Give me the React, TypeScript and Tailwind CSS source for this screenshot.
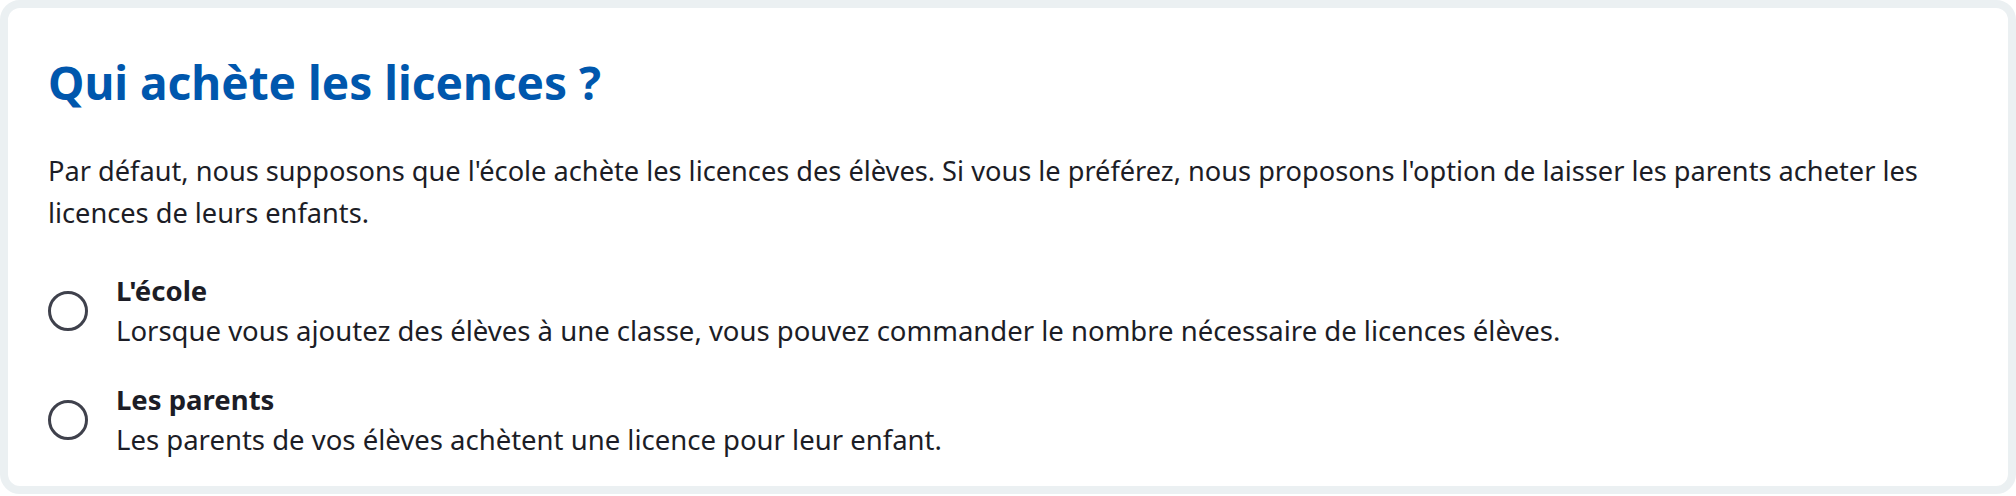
import React from "react";

const options = [
  {
    title: "L'école",
    text: "Lorsque vous ajoutez des élèves à une classe, vous pouvez commander le nombre nécessaire de licences élèves.",
  },
  {
    title: "Les parents",
    text: "Les parents de vos élèves achètent une licence pour leur enfant.",
  },
];

export default function App() {
  return (
    <div className="w-[2016px] h-[496px] bg-white" style={{ fontFamily: '"Noto Sans", "Open Sans", sans-serif' }}>
      <div className="h-[494px] rounded-[20px] border-[8px] border-[#ebf0f2] bg-white pl-10 pr-5 pt-[46px]">
        <h2 className="text-[46px] leading-[56px] font-bold text-[#0057ad]">Qui achète les licences ?</h2>
        <p className="mt-[40px] text-[27.2px] leading-[42px] text-[#1c1d26]">
          Par défaut, nous supposons que l'école achète les licences des élèves. Si vous le préférez, nous proposons l'option de laisser les parents acheter les licences de leurs enfants.
        </p>
        <div className="mt-[37px] flex flex-col gap-[29px]">
          {options.map((o) => (
            <label key={o.title} className="flex items-center gap-[28px]">
              <span className="h-10 w-10 shrink-0 rounded-full border-[3.5px] border-[#3f414c]" />
              <span className="flex flex-col text-[27.5px] leading-[40px] text-[#1c1d26]">
                <span className="font-bold">{o.title}</span>
                <span>{o.text}</span>
              </span>
            </label>
          ))}
        </div>
      </div>
    </div>
  );
}
